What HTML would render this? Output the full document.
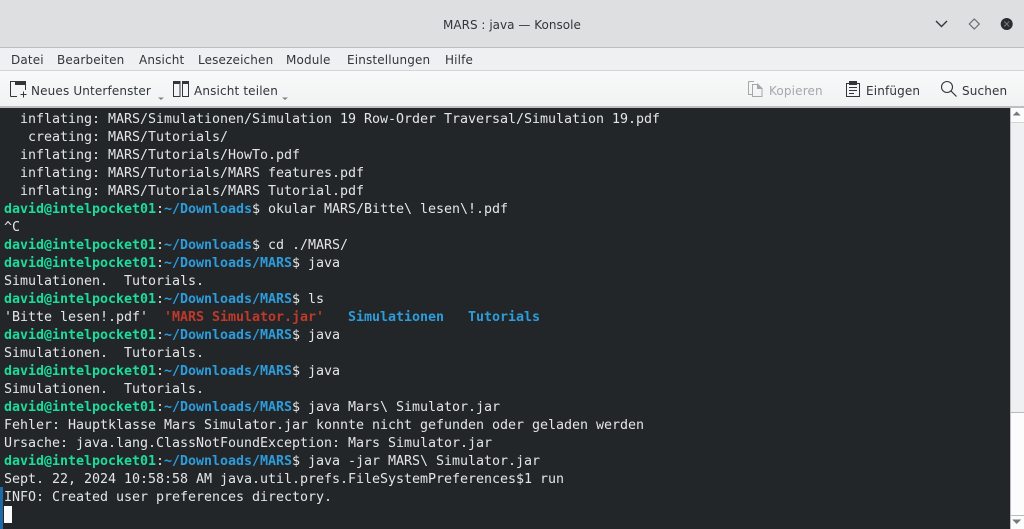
<!DOCTYPE html>
<html><head><meta charset="utf-8"><style>
html,body{margin:0;padding:0;width:1024px;height:529px;overflow:hidden;background:#232629}
div{position:absolute}
.ui{font-family:"DejaVu Sans","Liberation Sans",sans-serif;font-size:12px;color:#31363b;white-space:nowrap;line-height:16px;letter-spacing:.15px}
#term{left:0;top:108px;width:1010px;height:421px;background:#232629;font-family:"DejaVu Sans Mono","Liberation Mono",monospace;font-size:13.33px;letter-spacing:-.025px;line-height:18px;color:#e4e6e6;white-space:pre}
.g{color:#1cdc9a;font-weight:bold}
.bl{color:#2d9cdb;font-weight:bold}
.r{color:#c0392b;font-weight:bold}
</style></head><body>
<div style="left:0;top:0;width:1024px;height:47px;background:#dedfe1"></div>
<div style="left:0;top:47px;width:1024px;height:1px;background:#bcbebf"></div>
<div style="left:0;top:48px;width:1024px;height:22px;background:#eff0f1"></div>
<div style="left:0;top:70px;width:1024px;height:1px;background:#d4d5d6"></div>
<div style="left:0;top:71px;width:1024px;height:36px;background:linear-gradient(#f8f9f9,#f1f2f3)"></div>
<div style="left:0;top:106px;width:1024px;height:2px;background:#bcbebf"></div>

<div class="ui" style="left:443px;top:17px;letter-spacing:.02px">MARS : java — Konsole</div>
<svg style="position:absolute;left:925px;top:10px" width="99" height="30">
<path d="M11 11L16.500 16.500L22 11" fill="none" stroke="#31363b" stroke-width="1.400"/>
<path d="M49.300 9L54.300 14L49.300 19L44.300 14Z" fill="none" stroke="#6a6d70" stroke-width="1.200"/>
<circle cx="81.700" cy="14" r="6" fill="#2a2c2f"/>
<path d="M79.200 11.500L84.200 16.500M84.200 11.500L79.200 16.500" stroke="#77797c" stroke-width="1"/>
</svg>

<div class="ui" style="left:11px;top:52px">Datei</div>
<div class="ui" style="left:57px;top:52px">Bearbeiten</div>
<div class="ui" style="left:139px;top:52px">Ansicht</div>
<div class="ui" style="left:198px;top:52px">Lesezeichen</div>
<div class="ui" style="left:286px;top:52px">Module</div>
<div class="ui" style="left:347px;top:52px">Einstellungen</div>
<div class="ui" style="left:445px;top:52px">Hilfe</div>

<svg style="position:absolute;left:0;top:71px" width="1024" height="36">
<g fill="none" stroke="#31363b" stroke-width="1">
<path d="M10.500 25.500V10.500H25.500V19M10.500 25.500H17"/>
<path d="M23.500 20.500V26.500M20.500 23.500H26.500"/>
<rect x="173.500" y="10.500" width="6.500" height="15"/><rect x="182.500" y="10.500" width="6" height="15"/>
</g>
<rect x="15" y="10" width="11" height="4" fill="#31363b"/>
<rect x="173" y="10" width="7" height="3" fill="#31363b"/><rect x="182" y="10" width="7" height="3" fill="#31363b"/>
<path d="M158 26.500H164L161 29Z M282 26.500H288L285 29Z" fill="#7f8285"/>
<g fill="none" stroke="#a5a7a9" stroke-width="1">
<path d="M748.500 10.500H754M748.500 10.500V23.500H752"/>
<path d="M752.500 13.500H758L762 17.500V25.500H752.500Z"/>
</g>
<path d="M757 12L763 18H757Z" fill="#a5a7a9"/>
<g fill="none" stroke="#31363b" stroke-width="1">
<rect x="846.500" y="12.500" width="13" height="13"/>
<path d="M849 16.500H857M849 19.500H857M849 22.500H854"/>
<circle cx="947" cy="16" r="5.500" stroke-width="1.100"/><path d="M951 20L956.500 25.500" stroke-width="1.200"/>
</g>
<rect x="849" y="10" width="8" height="4" fill="#31363b"/>
</svg>
<div class="ui" style="left:31px;top:83px">Neues Unterfenster</div>
<div class="ui" style="left:194px;top:83px">Ansicht teilen</div>
<div class="ui" style="left:769px;top:83px;color:#a5a7a9">Kopieren</div>
<div class="ui" style="left:866px;top:83px">Einfügen</div>
<div class="ui" style="left:962px;top:83px">Suchen</div>

<div id="term"><span style="position:absolute;left:4px;top:1px;margin-top:2px">  inflating: MARS/Simulationen/Simulation 19 Row-Order Traversal/Simulation 19.pdf
   creating: MARS/Tutorials/
  inflating: MARS/Tutorials/HowTo.pdf
  inflating: MARS/Tutorials/MARS features.pdf
  inflating: MARS/Tutorials/MARS Tutorial.pdf
<span class="g">david@intelpocket01</span>:<span class="bl">~/Downloads</span>$ okular MARS/Bitte\ lesen\!.pdf
^C
<span class="g">david@intelpocket01</span>:<span class="bl">~/Downloads</span>$ cd ./MARS/
<span class="g">david@intelpocket01</span>:<span class="bl">~/Downloads/MARS</span>$ java
Simulationen.  Tutorials.
<span class="g">david@intelpocket01</span>:<span class="bl">~/Downloads/MARS</span>$ ls
'Bitte lesen!.pdf'  <span class="r">'MARS Simulator.jar'</span>   <span class="bl">Simulationen</span>   <span class="bl">Tutorials</span>
<span class="g">david@intelpocket01</span>:<span class="bl">~/Downloads/MARS</span>$ java
Simulationen.  Tutorials.
<span class="g">david@intelpocket01</span>:<span class="bl">~/Downloads/MARS</span>$ java
Simulationen.  Tutorials.
<span class="g">david@intelpocket01</span>:<span class="bl">~/Downloads/MARS</span>$ java Mars\ Simulator.jar
Fehler: Hauptklasse Mars Simulator.jar konnte nicht gefunden oder geladen werden
Ursache: java.lang.ClassNotFoundException: Mars Simulator.jar
<span class="g">david@intelpocket01</span>:<span class="bl">~/Downloads/MARS</span>$ java -jar MARS\ Simulator.jar
Sept. 22, 2024 10:58:58 AM java.util.prefs.FileSystemPreferences$1 run
INFO: Created user preferences directory.</span></div>
<div style="left:0;top:487px;width:3px;height:42px;background:#1d6aa5"></div>
<div style="left:4px;top:506px;width:8px;height:17px;background:#fcfcfc"></div>

<div style="left:1010px;top:108px;width:14px;height:421px;background:#fcfcfc"></div>
<div style="left:1010px;top:108px;width:1px;height:421px;background:#b9babb"></div>
<div style="left:1011px;top:122px;width:13px;height:290px;background:#eff0f1"></div>
<div style="left:1011px;top:122px;width:13px;height:1px;background:#d4d5d6"></div>
<div style="left:1011px;top:412px;width:13px;height:1px;background:#b9babb"></div>
<div style="left:1011px;top:515px;width:13px;height:1px;background:#b9babb"></div>
<svg style="position:absolute;left:1010px;top:108px" width="14" height="421">
<path d="M2.700 7.500L6.700 3.500L10.700 7.500Z" fill="#77797b"/>
<path d="M2.200 411.500H11.200L6.700 416Z" fill="#77797b"/>
</svg>
</body></html>
